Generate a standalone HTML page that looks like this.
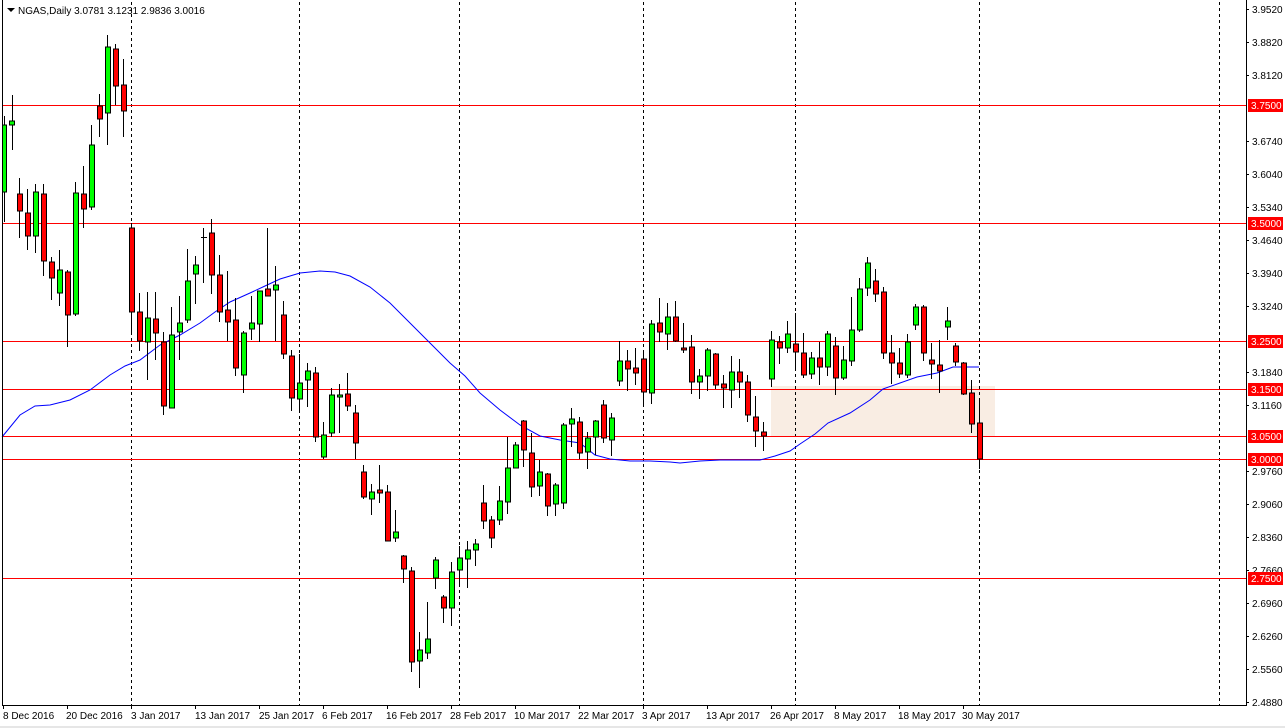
<!DOCTYPE html>
<html><head><meta charset="utf-8"><style>
html,body{margin:0;padding:0;background:#fff;}
body{width:1285px;height:728px;overflow:hidden;position:relative;font-family:"Liberation Sans",sans-serif;}
svg{position:absolute;left:0;top:0;}
.t{font-family:"Liberation Sans",sans-serif;font-size:10px;fill:#000;}
.w{stroke:#000;stroke-width:1;}
.g{fill:#00ff00;stroke:#000;stroke-width:1;}
.r{fill:#ff0000;stroke:#000;stroke-width:1;}
.d{stroke:#000;stroke-width:1;stroke-dasharray:3,3;}
.h{stroke:#ff0000;stroke-width:1;}
.lb{fill:#ff0000;}
.lt{font-family:"Liberation Sans",sans-serif;font-size:10px;fill:#fff;}
</style></head><body>
<svg width="1285" height="728" viewBox="0 0 1285 728" xmlns="http://www.w3.org/2000/svg">
<rect x="0" y="726" width="1285" height="2" fill="#e6e6e6"/>
<rect x="771" y="386" width="224" height="50" fill="#f9ede3"/>
<g class="d">
<line x1="131.5" y1="2" x2="131.5" y2="705"/><line x1="299.5" y1="2" x2="299.5" y2="705"/><line x1="459.5" y1="2" x2="459.5" y2="705"/><line x1="643.5" y1="2" x2="643.5" y2="705"/><line x1="795.5" y1="2" x2="795.5" y2="705"/><line x1="979.5" y1="2" x2="979.5" y2="705"/><line x1="1219.5" y1="2" x2="1219.5" y2="705"/>
</g>
<g class="h">
<line x1="2" y1="105.5" x2="1246" y2="105.5"/><line x1="2" y1="223.5" x2="1246" y2="223.5"/><line x1="2" y1="341.5" x2="1246" y2="341.5"/><line x1="2" y1="389.5" x2="1246" y2="389.5"/><line x1="2" y1="436.5" x2="1246" y2="436.5"/><line x1="2" y1="459.5" x2="1246" y2="459.5"/><line x1="2" y1="578.5" x2="1246" y2="578.5"/>
</g>
<polyline fill="none" stroke="#0000ff" stroke-width="1" points="2,437 20,415 35,406 50,405 70,400 90,390 110,375 125,366 140,360 160,345 180,335 200,323 215,312 230,302 250,293 265,286 280,279 300,273 320,271 335,272 350,276 370,287 390,303 410,323 430,343 450,363 465,376 480,393 500,410 520,425 540,436 560,440 580,443 595,455 610,459 630,461 650,461 670,462 680,463 700,461 720,460 745,460 760,460 775,456 790,451 800,444 815,434 828,423 850,413 870,400 883,389 900,383 917,377 937,373 953,367 979,367"/>
<g id="c">
<line class="w" x1="4.5" y1="116" x2="4.5" y2="222"/><rect class="g" x="2.5" y="125" width="4" height="67"/>
<line class="w" x1="12.5" y1="95" x2="12.5" y2="150"/><rect class="g" x="9.5" y="121" width="5" height="4"/>
<line class="w" x1="19.5" y1="178" x2="19.5" y2="238"/><rect class="r" x="17.5" y="194" width="5" height="17"/>
<line class="w" x1="27.5" y1="189" x2="27.5" y2="250"/><rect class="r" x="25.5" y="213" width="5" height="23"/>
<line class="w" x1="35.5" y1="184" x2="35.5" y2="253"/><rect class="g" x="33.5" y="192" width="5" height="44"/>
<line class="w" x1="43.5" y1="184" x2="43.5" y2="276"/><rect class="r" x="41.5" y="194" width="5" height="67"/>
<line class="w" x1="51.5" y1="257" x2="51.5" y2="300"/><rect class="r" x="49.5" y="262" width="5" height="16"/>
<line class="w" x1="59.5" y1="250" x2="59.5" y2="306"/><rect class="g" x="57.5" y="270" width="5" height="23"/>
<line class="w" x1="67.5" y1="270" x2="67.5" y2="347"/><rect class="r" x="65.5" y="272" width="5" height="43"/>
<line class="w" x1="75.5" y1="182" x2="75.5" y2="316"/><rect class="g" x="73.5" y="193" width="5" height="121"/>
<line class="w" x1="83.5" y1="166" x2="83.5" y2="228"/><rect class="r" x="81.5" y="194" width="5" height="15"/>
<line class="w" x1="91.5" y1="125" x2="91.5" y2="210"/><rect class="g" x="89.5" y="145" width="5" height="62"/>
<line class="w" x1="99.5" y1="94" x2="99.5" y2="137"/><rect class="r" x="97.5" y="106" width="5" height="13"/>
<line class="w" x1="107.5" y1="35" x2="107.5" y2="145"/><rect class="g" x="105.5" y="47" width="5" height="66"/>
<line class="w" x1="115.5" y1="44" x2="115.5" y2="105"/><rect class="r" x="113.5" y="49" width="5" height="37"/>
<line class="w" x1="123.5" y1="59" x2="123.5" y2="137"/><rect class="r" x="121.5" y="85" width="5" height="26"/>
<line class="w" x1="131.5" y1="223" x2="131.5" y2="335"/><rect class="r" x="129.5" y="228" width="5" height="84"/>
<line class="w" x1="139.5" y1="293" x2="139.5" y2="351"/><rect class="r" x="137.5" y="312" width="5" height="29"/>
<line class="w" x1="147.5" y1="292" x2="147.5" y2="380"/><rect class="g" x="145.5" y="318" width="5" height="24"/>
<line class="w" x1="155.5" y1="292" x2="155.5" y2="360"/><rect class="r" x="153.5" y="319" width="5" height="14"/>
<line class="w" x1="163.5" y1="332" x2="163.5" y2="415"/><rect class="r" x="161.5" y="342" width="5" height="64"/>
<line class="w" x1="171.5" y1="307" x2="171.5" y2="408"/><rect class="g" x="169.5" y="335" width="5" height="73"/>
<line class="w" x1="179.5" y1="296" x2="179.5" y2="360"/><rect class="g" x="177.5" y="323" width="5" height="9"/>
<line class="w" x1="187.5" y1="249" x2="187.5" y2="323"/><rect class="g" x="185.5" y="281" width="5" height="39"/>
<line class="w" x1="195.5" y1="256" x2="195.5" y2="304"/><rect class="g" x="193.5" y="265" width="5" height="9"/>
<line class="w" x1="203.5" y1="228" x2="203.5" y2="283"/><line class="w" x1="201" y1="237.5" x2="207" y2="237.5"/>
<line class="w" x1="211.5" y1="219" x2="211.5" y2="294"/><rect class="r" x="209.5" y="233" width="5" height="42"/>
<line class="w" x1="219.5" y1="255" x2="219.5" y2="322"/><rect class="r" x="217.5" y="275" width="5" height="37"/>
<line class="w" x1="227.5" y1="271" x2="227.5" y2="341"/><rect class="r" x="225.5" y="310" width="5" height="12"/>
<line class="w" x1="235.5" y1="298" x2="235.5" y2="376"/><rect class="r" x="233.5" y="320" width="5" height="48"/>
<line class="w" x1="243.5" y1="331" x2="243.5" y2="393"/><rect class="g" x="241.5" y="333" width="5" height="42"/>
<line class="w" x1="251.5" y1="296" x2="251.5" y2="340"/><rect class="g" x="249.5" y="323" width="5" height="6"/>
<line class="w" x1="259.5" y1="291" x2="259.5" y2="342"/><rect class="g" x="257.5" y="291" width="5" height="33"/>
<line class="w" x1="267.5" y1="228" x2="267.5" y2="296"/><rect class="r" x="265.5" y="289" width="5" height="7"/>
<line class="w" x1="275.5" y1="266" x2="275.5" y2="341"/><rect class="g" x="273.5" y="285" width="5" height="5"/>
<line class="w" x1="283.5" y1="301" x2="283.5" y2="359"/><rect class="r" x="281.5" y="315" width="5" height="39"/>
<line class="w" x1="291.5" y1="350" x2="291.5" y2="411"/><rect class="r" x="289.5" y="356" width="5" height="42"/>
<line class="w" x1="299.5" y1="354" x2="299.5" y2="412"/><rect class="g" x="297.5" y="383" width="5" height="16"/>
<line class="w" x1="307.5" y1="363" x2="307.5" y2="407"/><rect class="g" x="305.5" y="371" width="5" height="9"/>
<line class="w" x1="315.5" y1="367" x2="315.5" y2="442"/><rect class="r" x="313.5" y="373" width="5" height="64"/>
<line class="w" x1="323.5" y1="422" x2="323.5" y2="459"/><rect class="g" x="321.5" y="435" width="5" height="22"/>
<line class="w" x1="331.5" y1="388" x2="331.5" y2="437"/><rect class="g" x="329.5" y="395" width="5" height="38"/>
<line class="w" x1="339.5" y1="384" x2="339.5" y2="433"/><rect class="g" x="337.5" y="395" width="5" height="2"/>
<line class="w" x1="347.5" y1="373" x2="347.5" y2="411"/><rect class="r" x="345.5" y="394" width="5" height="12"/>
<line class="w" x1="355.5" y1="405" x2="355.5" y2="459"/><rect class="r" x="353.5" y="413" width="5" height="30"/>
<line class="w" x1="363.5" y1="465" x2="363.5" y2="499"/><rect class="r" x="361.5" y="472" width="5" height="25"/>
<line class="w" x1="371.5" y1="484" x2="371.5" y2="515"/><rect class="g" x="369.5" y="492" width="5" height="7"/>
<line class="w" x1="379.5" y1="465" x2="379.5" y2="503"/><rect class="r" x="377.5" y="490" width="5" height="3"/>
<line class="w" x1="387.5" y1="485" x2="387.5" y2="541"/><rect class="r" x="385.5" y="492" width="5" height="49"/>
<line class="w" x1="395.5" y1="510" x2="395.5" y2="542"/><rect class="g" x="393.5" y="532" width="5" height="6"/>
<line class="w" x1="403.5" y1="555" x2="403.5" y2="583"/><rect class="r" x="401.5" y="556" width="5" height="13"/>
<line class="w" x1="411.5" y1="567" x2="411.5" y2="672"/><rect class="r" x="409.5" y="571" width="5" height="91"/>
<line class="w" x1="419.5" y1="632" x2="419.5" y2="688"/><rect class="g" x="417.5" y="650" width="5" height="11"/>
<line class="w" x1="427.5" y1="602" x2="427.5" y2="659"/><rect class="g" x="425.5" y="639" width="5" height="14"/>
<line class="w" x1="435.5" y1="557" x2="435.5" y2="589"/><rect class="g" x="433.5" y="560" width="5" height="18"/>
<line class="w" x1="443.5" y1="595" x2="443.5" y2="623"/><rect class="r" x="441.5" y="597" width="5" height="11"/>
<line class="w" x1="451.5" y1="562" x2="451.5" y2="626"/><rect class="g" x="449.5" y="572" width="5" height="36"/>
<line class="w" x1="459.5" y1="546" x2="459.5" y2="585"/><rect class="g" x="457.5" y="558" width="5" height="12"/>
<line class="w" x1="467.5" y1="541" x2="467.5" y2="588"/><rect class="g" x="465.5" y="550" width="5" height="9"/>
<line class="w" x1="475.5" y1="539" x2="475.5" y2="566"/><rect class="g" x="473.5" y="544" width="5" height="6"/>
<line class="w" x1="483.5" y1="485" x2="483.5" y2="529"/><rect class="r" x="481.5" y="503" width="5" height="18"/>
<line class="w" x1="491.5" y1="516" x2="491.5" y2="548"/><rect class="r" x="489.5" y="520" width="5" height="18"/>
<line class="w" x1="499.5" y1="486" x2="499.5" y2="525"/><rect class="g" x="497.5" y="501" width="5" height="19"/>
<line class="w" x1="507.5" y1="437" x2="507.5" y2="514"/><rect class="g" x="505.5" y="468" width="5" height="34"/>
<line class="w" x1="515.5" y1="442" x2="515.5" y2="467"/><rect class="g" x="513.5" y="445" width="5" height="23"/>
<line class="w" x1="523.5" y1="420" x2="523.5" y2="467"/><rect class="r" x="521.5" y="421" width="5" height="29"/>
<line class="w" x1="531.5" y1="433" x2="531.5" y2="497"/><rect class="r" x="529.5" y="453" width="5" height="34"/>
<line class="w" x1="539.5" y1="460" x2="539.5" y2="496"/><rect class="g" x="537.5" y="472" width="5" height="14"/>
<line class="w" x1="547.5" y1="473" x2="547.5" y2="516"/><rect class="r" x="545.5" y="474" width="5" height="32"/>
<line class="w" x1="555.5" y1="483" x2="555.5" y2="516"/><rect class="g" x="553.5" y="485" width="5" height="19"/>
<line class="w" x1="563.5" y1="423" x2="563.5" y2="509"/><rect class="g" x="561.5" y="425" width="5" height="78"/>
<line class="w" x1="571.5" y1="408" x2="571.5" y2="447"/><rect class="g" x="569.5" y="419" width="5" height="5"/>
<line class="w" x1="579.5" y1="417" x2="579.5" y2="459"/><rect class="r" x="577.5" y="422" width="5" height="31"/>
<line class="w" x1="587.5" y1="432" x2="587.5" y2="469"/><rect class="g" x="585.5" y="438" width="5" height="14"/>
<line class="w" x1="595.5" y1="420" x2="595.5" y2="455"/><rect class="g" x="593.5" y="421" width="5" height="16"/>
<line class="w" x1="603.5" y1="400" x2="603.5" y2="443"/><rect class="r" x="601.5" y="405" width="5" height="33"/>
<line class="w" x1="611.5" y1="413" x2="611.5" y2="456"/><rect class="g" x="609.5" y="418" width="5" height="22"/>
<line class="w" x1="619.5" y1="341" x2="619.5" y2="386"/><rect class="g" x="617.5" y="361" width="5" height="20"/>
<line class="w" x1="627.5" y1="350" x2="627.5" y2="391"/><rect class="r" x="625.5" y="361" width="5" height="8"/>
<line class="w" x1="635.5" y1="348" x2="635.5" y2="385"/><rect class="r" x="633.5" y="368" width="5" height="5"/>
<line class="w" x1="643.5" y1="350" x2="643.5" y2="405"/><rect class="r" x="641.5" y="359" width="5" height="33"/>
<line class="w" x1="651.5" y1="320" x2="651.5" y2="404"/><rect class="g" x="649.5" y="324" width="5" height="69"/>
<line class="w" x1="659.5" y1="298" x2="659.5" y2="342"/><rect class="r" x="657.5" y="323" width="5" height="9"/>
<line class="w" x1="667.5" y1="303" x2="667.5" y2="350"/><rect class="g" x="665.5" y="317" width="5" height="17"/>
<line class="w" x1="675.5" y1="301" x2="675.5" y2="342"/><rect class="r" x="673.5" y="317" width="5" height="24"/>
<line class="w" x1="683.5" y1="323" x2="683.5" y2="353"/><rect class="r" x="681.5" y="348" width="5" height="2"/>
<line class="w" x1="691.5" y1="335" x2="691.5" y2="394"/><rect class="r" x="689.5" y="347" width="5" height="35"/>
<line class="w" x1="699.5" y1="369" x2="699.5" y2="399"/><rect class="g" x="697.5" y="376" width="5" height="6"/>
<line class="w" x1="707.5" y1="348" x2="707.5" y2="391"/><rect class="g" x="705.5" y="350" width="5" height="26"/>
<line class="w" x1="715.5" y1="353" x2="715.5" y2="389"/><rect class="r" x="713.5" y="354" width="5" height="31"/>
<line class="w" x1="723.5" y1="375" x2="723.5" y2="408"/><rect class="r" x="721.5" y="384" width="5" height="4"/>
<line class="w" x1="731.5" y1="356" x2="731.5" y2="408"/><rect class="g" x="729.5" y="372" width="5" height="18"/>
<line class="w" x1="739.5" y1="359" x2="739.5" y2="398"/><rect class="r" x="737.5" y="372" width="5" height="10"/>
<line class="w" x1="747.5" y1="375" x2="747.5" y2="422"/><rect class="r" x="745.5" y="382" width="5" height="33"/>
<line class="w" x1="755.5" y1="396" x2="755.5" y2="447"/><rect class="r" x="753.5" y="417" width="5" height="14"/>
<line class="w" x1="763.5" y1="422" x2="763.5" y2="451"/><rect class="r" x="761.5" y="432" width="5" height="4"/>
<line class="w" x1="771.5" y1="331" x2="771.5" y2="387"/><rect class="g" x="769.5" y="340" width="5" height="39"/>
<line class="w" x1="779.5" y1="336" x2="779.5" y2="364"/><rect class="r" x="777.5" y="342" width="5" height="6"/>
<line class="w" x1="787.5" y1="321" x2="787.5" y2="353"/><rect class="g" x="785.5" y="334" width="5" height="14"/>
<line class="w" x1="795.5" y1="313" x2="795.5" y2="369"/><rect class="r" x="793.5" y="344" width="5" height="8"/>
<line class="w" x1="803.5" y1="333" x2="803.5" y2="378"/><rect class="r" x="801.5" y="353" width="5" height="22"/>
<line class="w" x1="811.5" y1="352" x2="811.5" y2="379"/><rect class="g" x="809.5" y="358" width="5" height="16"/>
<line class="w" x1="819.5" y1="342" x2="819.5" y2="385"/><rect class="r" x="817.5" y="358" width="5" height="9"/>
<line class="w" x1="827.5" y1="331" x2="827.5" y2="376"/><rect class="g" x="825.5" y="334" width="5" height="33"/>
<line class="w" x1="835.5" y1="337" x2="835.5" y2="395"/><rect class="r" x="833.5" y="346" width="5" height="32"/>
<line class="w" x1="843.5" y1="346" x2="843.5" y2="380"/><rect class="g" x="841.5" y="360" width="5" height="18"/>
<line class="w" x1="851.5" y1="297" x2="851.5" y2="366"/><rect class="g" x="849.5" y="330" width="5" height="31"/>
<line class="w" x1="859.5" y1="278" x2="859.5" y2="332"/><rect class="g" x="857.5" y="289" width="5" height="41"/>
<line class="w" x1="867.5" y1="257" x2="867.5" y2="296"/><rect class="g" x="865.5" y="263" width="5" height="25"/>
<line class="w" x1="875.5" y1="269" x2="875.5" y2="302"/><rect class="r" x="873.5" y="281" width="5" height="13"/>
<line class="w" x1="883.5" y1="287" x2="883.5" y2="359"/><rect class="r" x="881.5" y="292" width="5" height="61"/>
<line class="w" x1="891.5" y1="335" x2="891.5" y2="384"/><rect class="r" x="889.5" y="353" width="5" height="10"/>
<line class="w" x1="899.5" y1="348" x2="899.5" y2="378"/><rect class="r" x="897.5" y="363" width="5" height="11"/>
<line class="w" x1="907.5" y1="334" x2="907.5" y2="378"/><rect class="g" x="905.5" y="342" width="5" height="33"/>
<line class="w" x1="915.5" y1="304" x2="915.5" y2="330"/><rect class="g" x="913.5" y="307" width="5" height="18"/>
<line class="w" x1="923.5" y1="305" x2="923.5" y2="361"/><rect class="r" x="921.5" y="307" width="5" height="46"/>
<line class="w" x1="931.5" y1="343" x2="931.5" y2="379"/><rect class="r" x="929.5" y="360" width="5" height="4"/>
<line class="w" x1="939.5" y1="340" x2="939.5" y2="393"/><rect class="r" x="937.5" y="365" width="5" height="6"/>
<line class="w" x1="947.5" y1="307" x2="947.5" y2="340"/><rect class="g" x="945.5" y="321" width="5" height="6"/>
<line class="w" x1="955.5" y1="343" x2="955.5" y2="366"/><rect class="r" x="953.5" y="346" width="5" height="16"/>
<line class="w" x1="963.5" y1="362" x2="963.5" y2="395"/><rect class="r" x="961.5" y="363" width="5" height="31"/>
<line class="w" x1="971.5" y1="380" x2="971.5" y2="433"/><rect class="r" x="969.5" y="393" width="5" height="31"/>
<line class="w" x1="979.5" y1="401" x2="979.5" y2="469"/><rect class="r" x="977.5" y="423" width="5" height="36"/>
</g>
<line x1="2.5" y1="0" x2="2.5" y2="705" stroke="#000"/>
<line x1="1246.5" y1="0" x2="1246.5" y2="706" stroke="#000"/>
<line x1="2" y1="705.5" x2="1247" y2="705.5" stroke="#000"/>
<polygon points="7,8 15,8 11,12" fill="#000"/>
<text class="t" x="18" y="14">NGAS,Daily  3.0781 3.1231 2.9836 3.0016</text>
<g stroke="#000">
<line x1="1246" y1="9.5" x2="1249" y2="9.5"/><line x1="1246" y1="42.5" x2="1249" y2="42.5"/><line x1="1246" y1="75.5" x2="1249" y2="75.5"/><line x1="1246" y1="141.5" x2="1249" y2="141.5"/><line x1="1246" y1="174.5" x2="1249" y2="174.5"/><line x1="1246" y1="207.5" x2="1249" y2="207.5"/><line x1="1246" y1="240.5" x2="1249" y2="240.5"/><line x1="1246" y1="273.5" x2="1249" y2="273.5"/><line x1="1246" y1="306.5" x2="1249" y2="306.5"/><line x1="1246" y1="372.5" x2="1249" y2="372.5"/><line x1="1246" y1="405.5" x2="1249" y2="405.5"/><line x1="1246" y1="471.5" x2="1249" y2="471.5"/><line x1="1246" y1="504.5" x2="1249" y2="504.5"/><line x1="1246" y1="537.5" x2="1249" y2="537.5"/><line x1="1246" y1="570.5" x2="1249" y2="570.5"/><line x1="1246" y1="603.5" x2="1249" y2="603.5"/><line x1="1246" y1="636.5" x2="1249" y2="636.5"/><line x1="1246" y1="669.5" x2="1249" y2="669.5"/><line x1="1246" y1="702.5" x2="1249" y2="702.5"/>
</g>
<g class="t">
<text x="1252" y="13">3.9520</text><text x="1252" y="46">3.8820</text><text x="1252" y="79">3.8120</text><text x="1252" y="145">3.6740</text><text x="1252" y="178">3.6040</text><text x="1252" y="211">3.5340</text><text x="1252" y="244">3.4640</text><text x="1252" y="277">3.3940</text><text x="1252" y="310">3.3240</text><text x="1252" y="376">3.1840</text><text x="1252" y="409">3.1160</text><text x="1252" y="475">2.9760</text><text x="1252" y="508">2.9060</text><text x="1252" y="541">2.8360</text><text x="1252" y="574">2.7660</text><text x="1252" y="607">2.6960</text><text x="1252" y="640">2.6260</text><text x="1252" y="673">2.5560</text><text x="1252" y="706">2.4880</text>
</g>
<rect class="lb" x="1248" y="99" width="35" height="13"/><text class="lt" x="1251" y="109">3.7500</text>
<rect class="lb" x="1248" y="217" width="35" height="13"/><text class="lt" x="1251" y="227">3.5000</text>
<rect class="lb" x="1248" y="335" width="35" height="13"/><text class="lt" x="1251" y="345">3.2500</text>
<rect class="lb" x="1248" y="383" width="35" height="13"/><text class="lt" x="1251" y="393">3.1500</text>
<rect class="lb" x="1248" y="430" width="35" height="13"/><text class="lt" x="1251" y="440">3.0500</text>
<rect class="lb" x="1248" y="453" width="35" height="13"/><text class="lt" x="1251" y="463">3.0000</text>
<rect class="lb" x="1248" y="572" width="35" height="13"/><text class="lt" x="1251" y="582">2.7500</text>
<g stroke="#000">
<line x1="3.5" y1="705" x2="3.5" y2="709"/><line x1="67.5" y1="705" x2="67.5" y2="709"/><line x1="131.5" y1="705" x2="131.5" y2="709"/><line x1="195.5" y1="705" x2="195.5" y2="709"/><line x1="259.5" y1="705" x2="259.5" y2="709"/><line x1="323.5" y1="705" x2="323.5" y2="709"/><line x1="387.5" y1="705" x2="387.5" y2="709"/><line x1="451.5" y1="705" x2="451.5" y2="709"/><line x1="515.5" y1="705" x2="515.5" y2="709"/><line x1="579.5" y1="705" x2="579.5" y2="709"/><line x1="643.5" y1="705" x2="643.5" y2="709"/><line x1="707.5" y1="705" x2="707.5" y2="709"/><line x1="771.5" y1="705" x2="771.5" y2="709"/><line x1="835.5" y1="705" x2="835.5" y2="709"/><line x1="899.5" y1="705" x2="899.5" y2="709"/><line x1="963.5" y1="705" x2="963.5" y2="709"/>
</g>
<g class="t">
<text x="3" y="719">8 Dec 2016</text><text x="66" y="719">20 Dec 2016</text><text x="131" y="719">3 Jan 2017</text><text x="195" y="719">13 Jan 2017</text><text x="259" y="719">25 Jan 2017</text><text x="322" y="719">6 Feb 2017</text><text x="386" y="719">16 Feb 2017</text><text x="450" y="719">28 Feb 2017</text><text x="514" y="719">10 Mar 2017</text><text x="578" y="719">22 Mar 2017</text><text x="642" y="719">3 Apr 2017</text><text x="706" y="719">13 Apr 2017</text><text x="770" y="719">26 Apr 2017</text><text x="834" y="719">8 May 2017</text><text x="898" y="719">18 May 2017</text><text x="962" y="719">30 May 2017</text>
</g>
</svg>
</body></html>
